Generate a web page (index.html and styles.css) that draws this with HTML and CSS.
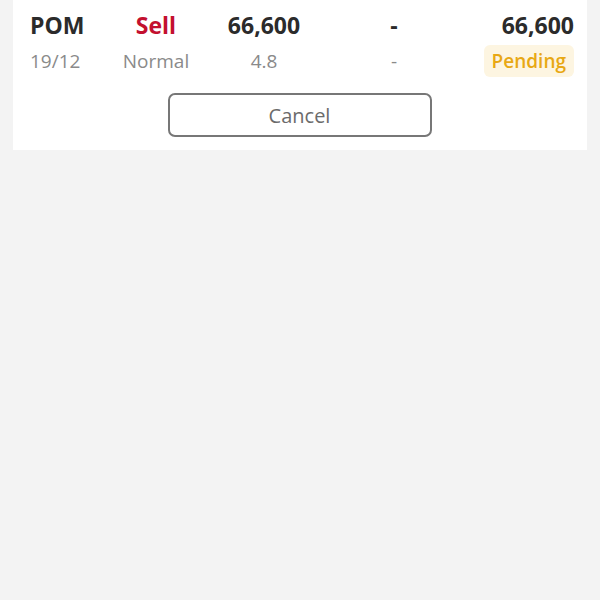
FILE: index.html
```html
<!DOCTYPE html>
<html lang="en">
<head>
    <meta charset="UTF-8">
    <meta name="viewport" content="width=device-width, initial-scale=1.0">
    <title>Orders</title>
    <link rel="stylesheet" href="styles.css">
</head>
<body>
    <div class="order-card">
        <div class="order-row main">
            <span class="col-first">POM</span>
            <span class="side-sell">Sell</span>
            <span>66,600</span>
            <span>-</span>
            <span class="col-last">66,600</span>
        </div>
        <div class="order-row sub">
            <span class="col-first">19/12</span>
            <span>Normal</span>
            <span>4.8</span>
            <span>-</span>
            <span class="col-last"><span class="status-pending">Pending</span></span>
        </div>
        <div class="actions">
            <button type="button" class="btn-cancel">Cancel</button>
        </div>
    </div>
</body>
</html>
```

FILE: styles.css
```css
body {
    margin: 0;
    background-color: #f3f3f3;
    font-family: "Open Sans", "Noto Sans", sans-serif;
    height: 600px;
}

/* Order card */
.order-card {
    margin: 0 13px;
    background-color: #fff;
    padding: 8px 13px 13px 17px;
}

.order-row {
    display: grid;
    grid-template-columns: 70px 112px 104px 156px 1fr;
    align-items: center;
    text-align: center;
}

.order-row .col-first {
    text-align: left;
}

.order-row .col-last {
    text-align: right;
}

.order-row.main {
    font-size: 23px;
    font-weight: 700;
    color: #2b2b2b;
    height: 34px;
}

.order-row.sub {
    font-size: 19px;
    color: #8a8a8a;
    height: 38px;
}

.side-sell {
    color: #c3102f;
}

.status-pending {
    display: inline-block;
    background-color: #fdf5e1;
    color: #e8a814;
    font-weight: 600;
    padding: 2px 8px;
    border-radius: 6px;
    line-height: 28px;
}

/* Cancel button */
.actions {
    display: flex;
    justify-content: center;
    margin-top: 13px;
    padding-right: 5px;
}

.btn-cancel {
    width: 264px;
    height: 44px;
    background-color: #fff;
    border: 2px solid #777;
    border-radius: 7px;
    font-family: "Open Sans", "Noto Sans", sans-serif;
    font-size: 20px;
    color: #6b6b6b;
    cursor: pointer;
}
```
